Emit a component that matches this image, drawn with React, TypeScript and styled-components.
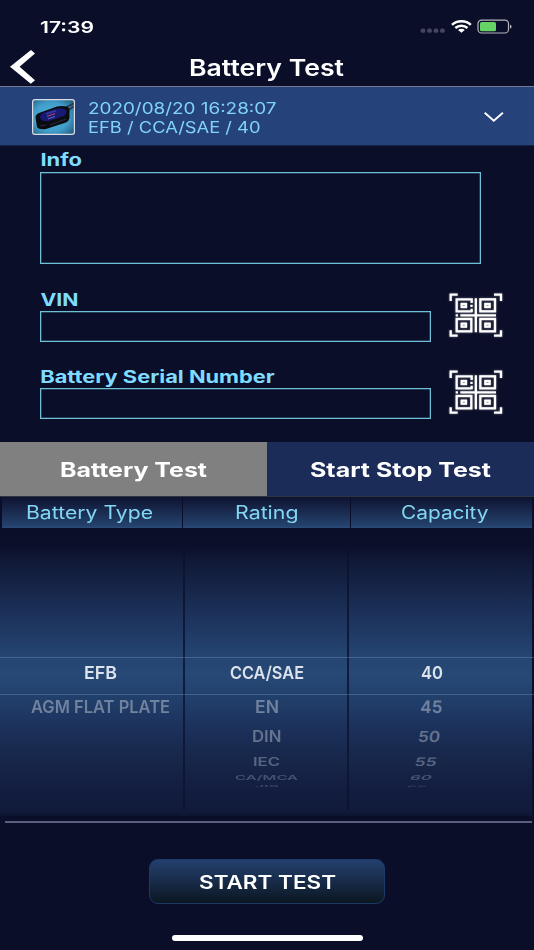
import React, { useLayoutEffect, useRef, useState } from 'react';
import styled, { createGlobalStyle } from 'styled-components';

const GlobalStyle = createGlobalStyle`
  * { box-sizing: border-box; }
  html, body { margin: 0; padding: 0; background: #0a0e29; }
  body { font-family: Inter, "Liberation Sans", sans-serif; overflow: hidden; }
  button { font: inherit; border: 0; padding: 0; margin: 0; background: none; color: inherit; }
`;

/* ---------- text stretched to a fixed width ---------- */

interface FitProps {
  width: number;
  size: number;
  weight?: number;
  line?: number;
  squash?: number;
  skew?: number;
  shift?: number;
  children: string;
}

const FitBox = styled.span<{ $w: number; $line: number }>`
  display: block;
  flex: none;
  width: ${(p) => p.$w}px;
  height: ${(p) => p.$line}px;
  line-height: ${(p) => p.$line}px;
  text-align: left;
`;

const FitInk = styled.span<{ $size: number; $weight: number }>`
  display: inline-block;
  vertical-align: top;
  white-space: nowrap;
  font-size: ${(p) => p.$size}px;
  font-weight: ${(p) => p.$weight};
  transform-origin: 0 50%;
`;

function FitText({ width, size, weight = 400, line = 20, squash = 1, skew = 0, shift = 0, children }: FitProps) {
  const ref = useRef<HTMLSpanElement>(null);
  const [ratio, setRatio] = useState(1);
  useLayoutEffect(() => {
    if (ref.current) {
      const natural = parseFloat(getComputedStyle(ref.current).width);
      if (natural > 0) setRatio(width / natural);
    }
  }, [width, size, weight, children]);
  return (
    <FitBox $w={width} $line={line}>
      <FitInk
        ref={ref}
        $size={size}
        $weight={weight}
        style={{ transform: `translateX(${shift}px) skewX(${skew}deg) scale(${ratio}, ${squash})` }}
      >
        {children}
      </FitInk>
    </FitBox>
  );
}

/* ---------- page parts ---------- */

const Screen = styled.main`
  width: 534px;
  height: 950px;
  background: #0a0e29;
  color: #fff;
  display: flex;
  flex-direction: column;
  overflow: hidden;
`;

const StatusBar = styled.div`
  height: 50px;
  padding: 3px 22px 0 40px;
  display: flex;
  align-items: center;
  justify-content: space-between;
`;

const TitleBar = styled.header`
  height: 36px;
  display: grid;
  grid-template-columns: 189px 155px 1fr;
  align-items: center;
`;

const BackButton = styled.button`
  width: 27px;
  height: 36px;
  margin-left: 9px;
  svg { display: block; }
`;

const Summary = styled.section`
  height: 60px;
  border-top: 1px solid #747b91;
  border-bottom: 1px solid #142345;
  background: #26427a;
  color: #7fd4f8;
  display: flex;
  align-items: center;
  padding: 2px 29px 0 32px;
`;

const SummaryText = styled.div`
  flex: 1;
  margin: 1px 0 0 13px;
`;

const Form = styled.section`
  height: 296px;
  padding: 4px 31px 0 40px;
  color: #7fdbff;
`;

const Field = styled.div<{ $h: number }>`
  height: ${(p) => p.$h}px;
  display: flex;
  flex-direction: column;
`;

const FieldRow = styled.div`
  display: flex;
  justify-content: space-between;
`;

const Label = styled.label<{ $h: number }>`
  display: block;
  height: ${(p) => p.$h}px;
`;

const Box = styled.div<{ $w: number; $h: number }>`
  width: ${(p) => p.$w}px;
  height: ${(p) => p.$h}px;
  border: 1px solid #70bfd6;
  box-shadow: inset 0 0 0 0.5px rgba(112, 191, 214, 0.55);
`;

const ScanButton = styled.button`
  width: 54px;
  height: 44px;
  margin-top: 3px;
  svg { display: block; filter: drop-shadow(0 0 1px rgba(220, 225, 210, 0.45)); }
`;

const Tabs = styled.div`
  height: 54px;
  display: grid;
  grid-template-columns: 1fr 1fr;
`;

const Tab = styled.button<{ $active?: boolean }>`
  display: flex;
  align-items: center;
  justify-content: center;
  padding: 2px 1px 0 0;
  color: #fff;
  background: ${(p) => (p.$active ? '#808080' : '#1b2c59')};
`;

const Heads = styled.div`
  height: 32px;
  padding: 0 2px;
  border-top: 1px solid #303341;
  display: grid;
  grid-template-columns: 180px 167px 1fr;
  column-gap: 1px;
`;

const Head = styled.div<{ $l?: number; $r?: number }>`
  display: flex;
  align-items: center;
  justify-content: center;
  padding: 2px ${(p) => p.$r ?? 0}px 0 ${(p) => p.$l ?? 0}px;
  color: #83d6f2;
  border-bottom: 1px solid #2a4b78;
  background: linear-gradient(#0e1331, #25446f);
`;

const Picker = styled.div`
  position: relative;
  height: 288px;
  margin-right: 2px;
  display: grid;
  grid-template-columns: 183px 2px 162px 2px 1fr;
  background: linear-gradient(#0a0e29 0%, #0b0f2a 6%, #101835 11%, #17274b 22%, #1d345d 32%, #244471 44%, #274976 51%, #213e6a 60%, #1b2f58 71%, #172649 81%, #131d40 91%, #111a39 98.5%, #0d1330 100%);
`;

const Divider = styled.div`
  margin: 17px 0 6px;
  background: linear-gradient(#0b112c, #101b3c 40%, #111b3d 60%, #0c1330);
`;

const Wheel = styled.div<{ $l?: number; $r?: number }>`
  padding: 128px ${(p) => p.$r ?? 0}px 0 ${(p) => p.$l ?? 0}px;
  overflow: hidden;
`;

const Item = styled.div<{ $h: number; $color: string }>`
  height: ${(p) => p.$h}px;
  display: flex;
  align-items: center;
  justify-content: center;
  color: ${(p) => p.$color};
`;

const Selection = styled.div`
  position: absolute;
  left: 0;
  right: -2px;
  top: 129px;
  height: 38px;
  border-top: 1px solid rgba(130, 160, 195, 0.34);
  border-bottom: 1px solid rgba(130, 160, 195, 0.34);
`;

const Rule = styled.div`
  height: 2px;
  margin: 5px 2px 0 5px;
  background: #5c6080;
`;

const Footer = styled.footer`
  flex: 1;
  display: flex;
  flex-direction: column;
  align-items: center;
  padding-top: 36px;
`;

const StartButton = styled.button`
  width: 236px;
  height: 45px;
  border: 1px solid #1c3a68;
  border-radius: 9px;
  background: linear-gradient(#23406d, #182b49 50%, #0b1620);
  color: #fff;
  display: flex;
  align-items: center;
  justify-content: center;
`;

const HomeBar = styled.div`
  width: 191px;
  height: 6px;
  margin-top: 31px;
  border-radius: 3px;
  background: #fff;
`;

/* ---------- drawings ---------- */

const StatusIcons = () => (
  <svg width="94" height="20" viewBox="418 17 94 20">
    {[423, 429.5, 436, 442.4].map((x) => (
      <rect key={x} x={x - 2.3} y="28.6" width="4.6" height="4.2" rx="1.6" fill="#45465d" />
    ))}
    <g fill="none" stroke="#fff" strokeWidth="2.5">
      <path d="M452 24.8C457 20 466 20 470.8 24.8" />
      <path d="M455.3 28C458.7 25 464.1 25 467.5 28" />
    </g>
    <path d="M458 29.9C460 28.5 462.8 28.5 464.8 29.9L461.4 32.8Z" fill="#fff" />
    <rect x="478" y="20.2" width="30.5" height="12.8" rx="3.6" fill="none" stroke="#b5b6bf" strokeWidth="1.2" />
    <rect x="480" y="22" width="16" height="9.3" rx="1.6" fill="#65d366" />
    <path d="M510 24.4C512.1 25.2 512.1 27.9 510 28.7Z" fill="#b5b6bf" />
  </svg>
);

const BackIcon = () => (
  <svg width="27" height="36" viewBox="9 50 27 36">
    <path d="M31 50L35 53.4L19.6 66.8L35 80.2L30.8 83.8L10 66.8Z" fill="#fff" />
  </svg>
);

const Thumbnail = () => (
  <svg width="43" height="36" viewBox="0 0 43 36">
    <defs>
      <radialGradient id="sky" cx="45%" cy="50%" r="70%">
        <stop offset="0" stopColor="#4fb4e0" />
        <stop offset="0.6" stopColor="#419dca" />
        <stop offset="1" stopColor="#205b7d" />
      </radialGradient>
    </defs>
    <rect x="0.6" y="0.6" width="41.8" height="34.8" rx="2.4" fill="url(#sky)" stroke="#dcdce2" strokeWidth="1.2" />
    <path d="M35 12L41.5 7.500M33 9L41.500 4.500" stroke="#26384a" strokeWidth="1.8" />
    <path d="M3.500 18.500Q3.500 15.500 7 14L25 7.500Q30 6.500 35 7.500Q38 9 37.500 12L37.500 19Q37 22 34 23.500L14 30Q7 31 5 28Z" fill="#0b0c12" />
    <path d="M8 18Q8.500 14.500 13 13.300L25 9.600Q31 8.500 34 10.800Q35.500 14 32 17L17 22Q9 23.500 8 18Z" fill="#171a72" />
    <path d="M14 14.800L24 11.700" stroke="#303a9c" strokeWidth="1.800" />
    <path d="M15 17.300L23 14.700" stroke="#c24a6c" strokeWidth="1" />
    <path d="M16 19.800L23 17.500" stroke="#6470bf" strokeWidth="1" />
    <path d="M8 27L14 26M18 26L34 20" stroke="#2a2c34" strokeWidth="1.2" />
  </svg>
);

const DownIcon = () => (
  <svg width="22" height="14" viewBox="483 110 22 14">
    <path d="M484.7 112.8L493.8 120.8L502.9 112.8" fill="none" stroke="#fff" strokeWidth="1.9" />
  </svg>
);

const ScanIcon = () => (
  <svg width="54" height="44" viewBox="-2 -2 162 132">
    <g fill="none" stroke="#fff" strokeWidth="7">
      <path d="M3 22V3H24M133 3H154V22M3 110V126H24M133 126H154V110" />
      <path d="M66 17H21V53H66M66 14V28M66 45V56" />
      <rect x="92" y="17" width="44" height="36" />
      <rect x="21" y="76" width="44" height="37" />
      <rect x="92" y="76" width="44" height="37" />
      <path d="M78.5 14V116M32 65H139" />
      <path d="M18 65H25M62 36.5H69" />
    </g>
    <g fill="none" stroke="#fff" strokeWidth="7">
      <rect x="36" y="31" width="13" height="9" />
      <rect x="107" y="31" width="13" height="9" />
      <rect x="36" y="90" width="13" height="9" />
      <rect x="107" y="90" width="13" height="9" />
    </g>
  </svg>
);

/* ---------- wheel data ---------- */

const steps = [
  { h: 34, squash: 1, color: '#dce3ec' },
  { h: 33.4, squash: 0.98, color: '#71829f' },
  { h: 27, squash: 0.87, color: '#64738f' },
  { h: 22.5, squash: 0.66, color: '#586582' },
  { h: 11, squash: 0.38, color: '#46536f' },
  { h: 4.5, squash: 0.1, color: '#3c4866' },
];

interface Entry { text: string; width: number; shift?: number; skew?: number }

const types: Entry[] = [
  { text: 'EFB', width: 33 },
  { text: 'AGM FLAT PLATE', width: 139 },
];

const ratings: Entry[] = [
  { text: 'CCA/SAE', width: 74 },
  { text: 'EN', width: 24 },
  { text: 'DIN', width: 29.5 },
  { text: 'IEC', width: 27 },
  { text: 'CA/MCA', width: 63 },
  { text: 'JIS', width: 24 },
];

const capacities: Entry[] = [
  { text: '40', width: 22 },
  { text: '45', width: 22, shift: -0.7, skew: -2 },
  { text: '50', width: 22, shift: -2.8, skew: -7 },
  { text: '55', width: 22, shift: -6.3, skew: -14 },
  { text: '60', width: 21.5, shift: -10.7, skew: -28 },
  { text: '65', width: 20, shift: -15, skew: -45 },
];

const WheelItems = ({ items }: { items: Entry[] }) => (
  <>
    {items.map((it, i) => (
      <Item key={it.text} $h={steps[i].h} $color={steps[i].color}>
        <FitText width={it.width} size={17.5} weight={600} squash={steps[i].squash} shift={it.shift} skew={it.skew}>
          {it.text}
        </FitText>
      </Item>
    ))}
  </>
);

export default function App() {
  return (
    <>
      <GlobalStyle />
      <Screen>
        <StatusBar>
          <FitText width={54} size={16.5} weight={600}>17:39</FitText>
          <StatusIcons />
        </StatusBar>
        <TitleBar>
          <BackButton aria-label="Back"><BackIcon /></BackButton>
          <FitText width={155} size={22.5} weight={600} line={28}>Battery Test</FitText>
        </TitleBar>
        <Summary>
          <Thumbnail />
          <SummaryText>
            <FitText width={188.5} size={15.8} line={19}>2020/08/20 16:28:07</FitText>
            <FitText width={172.5} size={15.8} line={19}>EFB / CCA/SAE / 40</FitText>
          </SummaryText>
          <DownIcon />
        </Summary>
        <Form>
          <Field $h={140}>
            <Label $h={22}><FitText width={41.5} size={17.3} weight={700} shift={0.4}>Info</FitText></Label>
            <Box $w={441} $h={92} />
          </Field>
          <FieldRow>
            <Field $h={77}>
              <Label $h={21}><FitText width={38} size={17.3} weight={700} shift={0.4}>VIN</FitText></Label>
              <Box $w={391} $h={31} />
            </Field>
            <ScanButton aria-label="Scan VIN"><ScanIcon /></ScanButton>
          </FieldRow>
          <FieldRow>
            <Field $h={77}>
              <Label $h={21}><FitText width={234.5} size={17.3} weight={700} shift={0.2}>Battery Serial Number</FitText></Label>
              <Box $w={391} $h={31} />
            </Field>
            <ScanButton aria-label="Scan serial number"><ScanIcon /></ScanButton>
          </FieldRow>
        </Form>
        <Tabs>
          <Tab $active><FitText width={147} size={20.3} weight={700} line={26}>Battery Test</FitText></Tab>
          <Tab><FitText width={181} size={20.3} weight={700} line={26}>Start Stop Test</FitText></Tab>
        </Tabs>
        <Heads>
          <Head $r={6}><FitText width={127} size={18}>Battery Type</FitText></Head>
          <Head><FitText width={63.5} size={18}>Rating</FitText></Head>
          <Head $l={6}><FitText width={87.5} size={18}>Capacity</FitText></Head>
        </Heads>
        <Picker>
          <Wheel $l={18}><WheelItems items={types} /></Wheel>
          <Divider />
          <Wheel $l={1}><WheelItems items={ratings} /></Wheel>
          <Divider />
          <Wheel $r={17}><WheelItems items={capacities} /></Wheel>
          <Selection />
        </Picker>
        <Rule />
        <Footer>
          <StartButton><FitText width={137} size={18.3} weight={600}>START TEST</FitText></StartButton>
          <HomeBar />
        </Footer>
      </Screen>
    </>
  );
}
